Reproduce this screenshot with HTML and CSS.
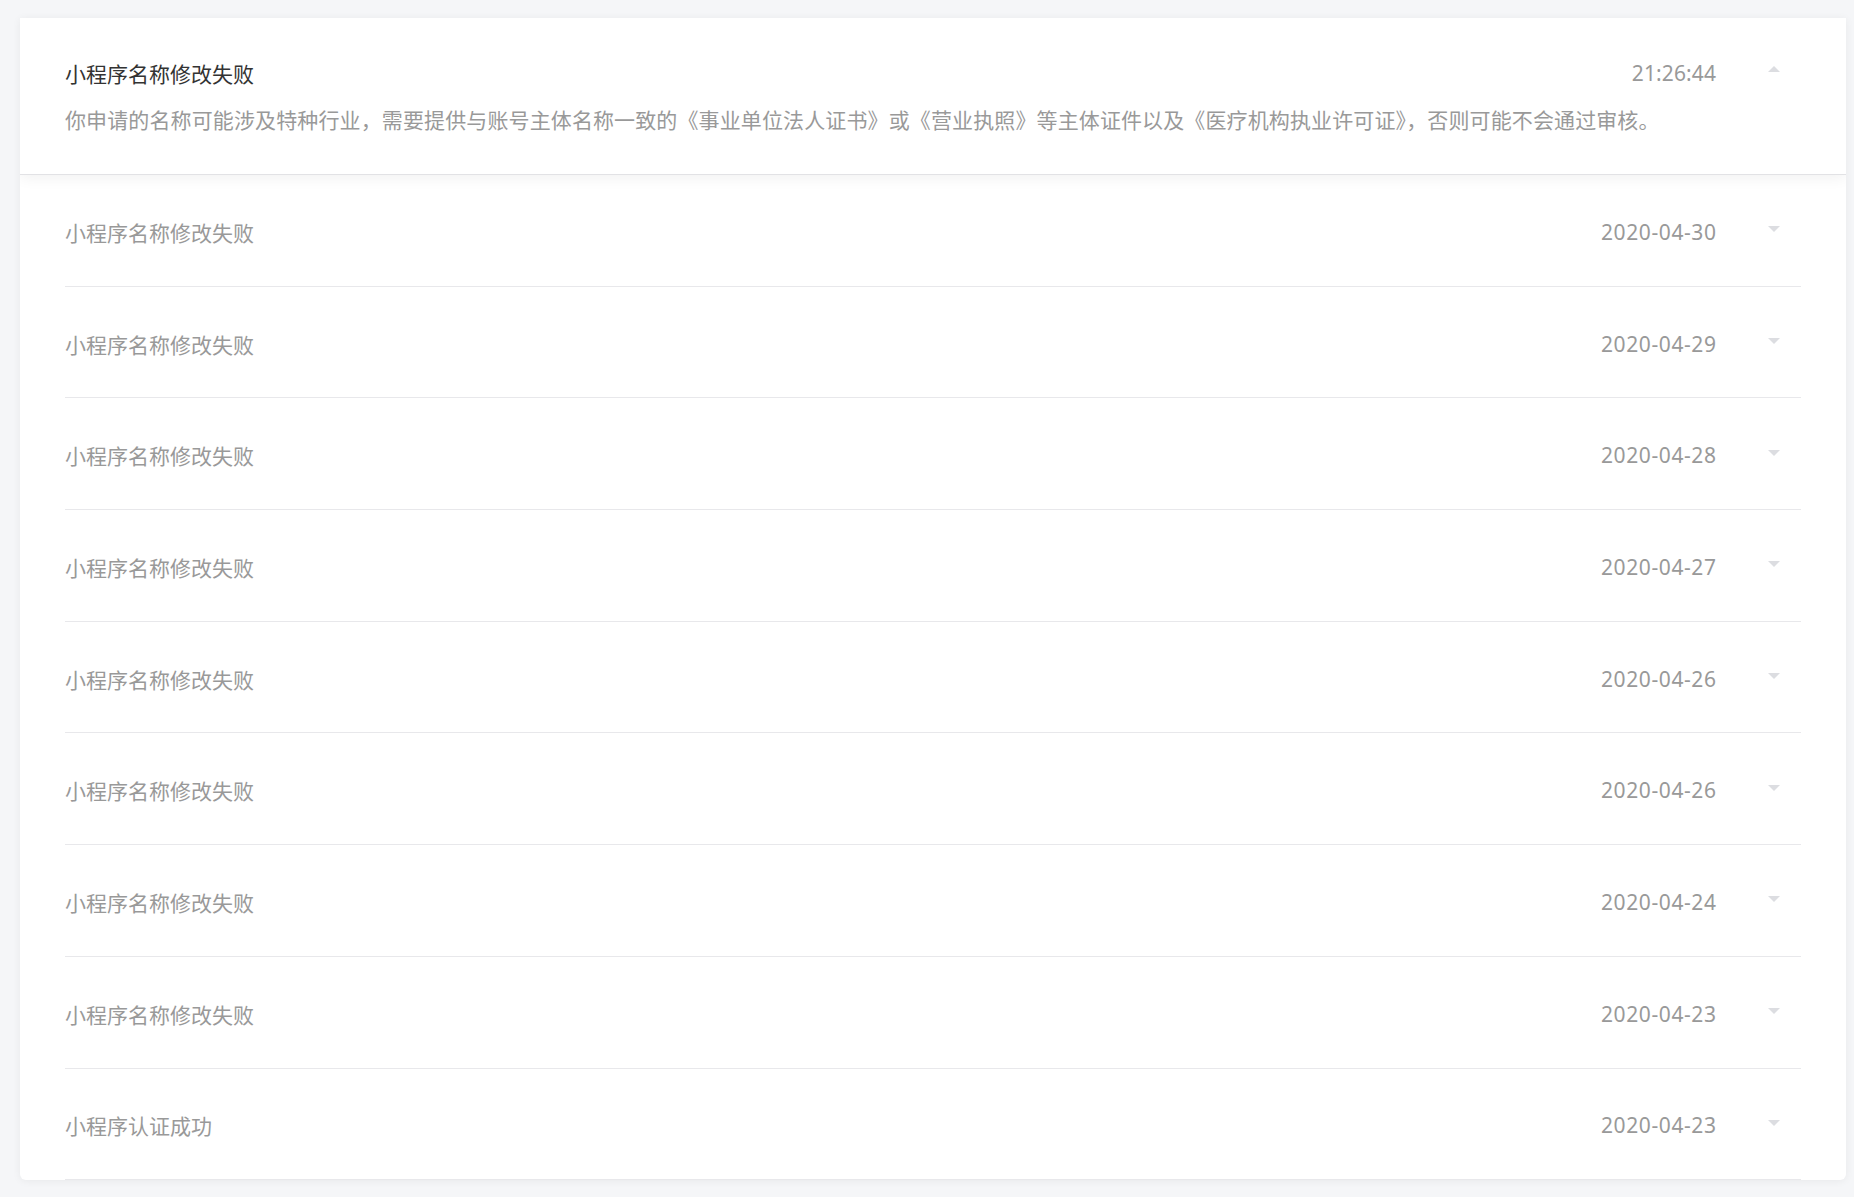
FILE: index.html
```html
<!DOCTYPE html>
<html lang="zh-CN">
<head>
<meta charset="utf-8">
<title>消息列表</title>
<link rel="stylesheet" href="styles.css">
</head>
<body>
<div class="card">
  <div class="item open">
    <div class="head">
      <span class="title">小程序名称修改失败</span>
      <span class="time clock">21:26:44</span>
      <span class="arrow up"></span>
    </div>
    <div class="desc">你申请的名称可能涉及特种行业，需要提供与账号主体名称一致的《事业单位法人证书》或《营业执照》等主体证件以及《医疗机构执业许可证》，否则可能不会通过审核。</div>
  </div>
  <div class="item"><div class="head"><span class="title">小程序名称修改失败</span><span class="time">2020-04-30</span><span class="arrow"></span></div></div>
  <div class="item"><div class="head"><span class="title">小程序名称修改失败</span><span class="time">2020-04-29</span><span class="arrow"></span></div></div>
  <div class="item"><div class="head"><span class="title">小程序名称修改失败</span><span class="time">2020-04-28</span><span class="arrow"></span></div></div>
  <div class="item"><div class="head"><span class="title">小程序名称修改失败</span><span class="time">2020-04-27</span><span class="arrow"></span></div></div>
  <div class="item"><div class="head"><span class="title">小程序名称修改失败</span><span class="time">2020-04-26</span><span class="arrow"></span></div></div>
  <div class="item"><div class="head"><span class="title">小程序名称修改失败</span><span class="time">2020-04-26</span><span class="arrow"></span></div></div>
  <div class="item"><div class="head"><span class="title">小程序名称修改失败</span><span class="time">2020-04-24</span><span class="arrow"></span></div></div>
  <div class="item"><div class="head"><span class="title">小程序名称修改失败</span><span class="time">2020-04-23</span><span class="arrow"></span></div></div>
  <div class="item"><div class="head"><span class="title">小程序认证成功</span><span class="time">2020-04-23</span><span class="arrow"></span></div></div>
</div>
</body>
</html>
```
FILE: styles.css
```css
html, body {
  margin: 0;
  padding: 0;
}
body {
  background: #f5f6f8;
  font-family: "Noto Sans CJK SC", "Noto Sans", sans-serif;
  padding: 18px 8px 17px 20px;
}
.card {
  width: 1826px;
  background: #ffffff;
  border-radius: 0 0 6px 6px;
  box-shadow: 0 1px 8px rgba(0, 0, 0, 0.06);
  overflow: hidden;
}
.item {
  box-sizing: border-box;
  height: 111.7px;
  margin: 0 45px;
  padding-top: 3px;
  border-bottom: 1px solid #e8e8eb;
  display: flex;
  flex-direction: column;
  justify-content: center;
}
.item.open {
  height: 157px;
  margin: 0;
  padding: 0 45px;
  border-bottom: 1px solid #e2e2e5;
  box-shadow: 0 3px 14px rgba(0, 0, 0, 0.06);
  position: relative;
  z-index: 1;
  justify-content: flex-start;
  padding-top: 40px;
}
.head {
  display: flex;
  align-items: center;
  height: 30px;
  font-size: 21px;
  line-height: 30px;
}
.title {
  flex: 1;
  color: #999999;
}
.open .title {
  color: #333333;
}
.time {
  color: #999999;
  font-family: "Noto Sans", "Noto Sans CJK SC", sans-serif;
  letter-spacing: 0.6px;
  margin-right: -0.6px;
}
.time.clock {
  letter-spacing: 0.1px;
  margin-right: 0;
}
.arrow {
  width: 0;
  height: 0;
  border-left: 6px solid transparent;
  border-right: 6px solid transparent;
  border-top: 6px solid #dcdde1;
  margin-left: 52px;
  margin-right: 21px;
  margin-bottom: 5px;
}
.arrow.up {
  border-top: 0;
  border-bottom: 6px solid #dcdde1;
  margin-bottom: 8px;
}
.desc {
  margin-top: 16px;
  font-size: 21px;
  line-height: 30px;
  color: #999999;
  letter-spacing: 0.12px;
  white-space: nowrap;
}
```
